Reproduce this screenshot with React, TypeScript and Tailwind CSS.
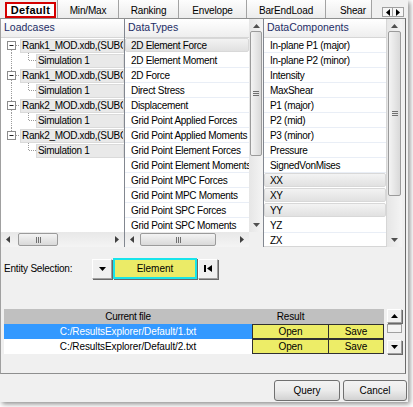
import React from 'react';

type Dir = 'up' | 'down' | 'left' | 'right';

function Tri({ dir, w = 7, h = 4, c = '#000' }: { dir: Dir; w?: number; h?: number; c?: string }) {
  const vertical = dir === 'up' || dir === 'down';
  const W = vertical ? w : h;
  const H = vertical ? h : w;
  const pts =
    dir === 'up' ? `0,${h} ${w},${h} ${w / 2},0` :
    dir === 'down' ? `0,0 ${w},0 ${w / 2},${h}` :
    dir === 'left' ? `${h},0 ${h},${w} 0,${w / 2}` :
    `0,0 0,${w} ${h},${w / 2}`;
  return (
    <svg width={W} height={H} className="block">
      <polygon points={pts} fill={c} />
    </svg>
  );
}

const tabs = [
  { label: 'Min/Max', w: 'w-[61px]' },
  { label: 'Ranking', w: 'w-[60px]' },
  { label: 'Envelope', w: 'w-[68px]' },
  { label: 'BarEndLoad', w: 'w-[79px]' },
];

const tree = [
  { t: 'Rank1_MOD.xdb,(SUBCASE 1)', root: true, first: true, last: false },
  { t: 'Simulation 1', root: false, cont: true },
  { t: 'Rank1_MOD.xdb,(SUBCASE 2)', root: true, first: false, last: false },
  { t: 'Simulation 1', root: false, cont: true },
  { t: 'Rank2_MOD.xdb,(SUBCASE 1)', root: true, first: false, last: false },
  { t: 'Simulation 1', root: false, cont: true },
  { t: 'Rank2_MOD.xdb,(SUBCASE 2)', root: true, first: false, last: true },
  { t: 'Simulation 1', root: false, cont: false },
];

const dataTypes = [
  '2D Element Force', '2D Element Moment', '2D Force', 'Direct Stress', 'Displacement',
  'Grid Point Applied Forces', 'Grid Point Applied Moments', 'Grid Point Element Forces',
  'Grid Point Element Moments', 'Grid Point MPC Forces', 'Grid Point MPC Moments',
  'Grid Point SPC Forces', 'Grid Point SPC Moments',
];

const dataComponents = [
  'In-plane P1 (major)', 'In-plane P2 (minor)', 'Intensity', 'MaxShear', 'P1 (major)', 'P2 (mid)',
  'P3 (minor)', 'Pressure', 'SignedVonMises', 'XX', 'XY', 'YY', 'YZ', 'ZX',
];
const picked = ['2D Element Force', 'XX', 'XY', 'YY'];

function Header({ children }: { children: React.ReactNode }) {
  return (
    <div className="h-[19px] shrink-0 flex items-center pl-[3px] bg-gradient-to-b from-white to-[#eeeeee] border-b border-[#d6d6d6] text-[#1d2d66] text-[10.5px] tracking-normal whitespace-nowrap">
      {children}
    </div>
  );
}

function Grip({ vertical }: { vertical?: boolean }) {
  return vertical ? (
    <div className="flex flex-col gap-[1px]">
      <div className="w-[6px] h-[1px] bg-[#707070]" />
      <div className="w-[6px] h-[1px] bg-[#707070]" />
      <div className="w-[6px] h-[1px] bg-[#707070]" />
    </div>
  ) : (
    <div className="flex gap-[1px]">
      <div className="w-[1px] h-[6px] bg-[#707070]" />
      <div className="w-[1px] h-[6px] bg-[#707070]" />
      <div className="w-[1px] h-[6px] bg-[#707070]" />
    </div>
  );
}

function ListRow({ t }: { t: string }) {
  if (picked.includes(t)) {
    return (
      <div className="h-[15px] shrink-0 pb-[1px]">
        <div className="h-[14px] flex items-center pl-[5px] bg-gradient-to-b from-[#f3f3f3] to-[#e1e1e1] border border-[#d8d8d8] rounded-[2px] whitespace-nowrap">{t}</div>
      </div>
    );
  }
  return <div className="h-[15px] shrink-0 flex items-center pl-[6px] border-b border-[#e9eef6] whitespace-nowrap">{t}</div>;
}

function TreeRow({ r }: { r: (typeof tree)[number] }) {
  const dot = { stroke: '#9c9c9c', strokeDasharray: '1 1', strokeWidth: 1 };
  return (
    <div className="h-[15px] shrink-0 flex items-center">
      {r.root ? (
        <svg width={19} height={15} className="shrink-0">
          {!r.first && <line x1={10.5} y1={0} x2={10.5} y2={3} {...dot} />}
          {!r.last && <line x1={10.5} y1={12} x2={10.5} y2={15} {...dot} />}
          <line x1={15} y1={7.5} x2={19} y2={7.5} {...dot} />
          <rect x={6.5} y={3.5} width={8} height={8} fill="#fff" stroke="#8c8c8c" />
          <line x1={8.5} y1={7.5} x2={12.5} y2={7.5} stroke="#202020" />
        </svg>
      ) : (
        <svg width={35} height={15} className="shrink-0">
          {r.cont && <line x1={10.5} y1={0} x2={10.5} y2={15} {...dot} />}
          <line x1={27.5} y1={0} x2={27.5} y2={8} {...dot} />
          <line x1={28} y1={7.5} x2={35} y2={7.5} {...dot} />
        </svg>
      )}
      <div className="h-[14px] flex-1 flex items-center pl-[1px] bg-[#e9e9e9] border border-[#dadada] whitespace-nowrap overflow-hidden">
        {r.t}
      </div>
    </div>
  );
}

function HScroll({ w, thumbL, thumbW }: { w: string; thumbL: string; thumbW: string }) {
  return (
    <div className={`${w} h-[15px] shrink-0 flex items-center bg-gradient-to-b from-[#e8e8e8] to-[#f4f4f4]`}>
      <div className="w-[14px] flex justify-center"><Tri dir="left" w={7} h={4} c="#404040" /></div>
      <div className={`${thumbL} shrink-0`} />
      <div className={`${thumbW} h-[13px] shrink-0 flex items-center justify-center rounded-[2px] border border-[#9b9b9b] bg-gradient-to-b from-[#f4f4f4] to-[#d9d9d9]`}>
        <Grip />
      </div>
      <div className="flex-1" />
      <div className="w-[14px] flex justify-center"><Tri dir="right" w={7} h={4} c="#404040" /></div>
    </div>
  );
}

function VScroll({ w, thumbH }: { w: string; thumbH: string }) {
  return (
    <div className={`${w} flex-1 flex flex-col bg-gradient-to-r from-[#e6e6e6] to-[#f4f4f4]`}>
      <div className="h-[12px] shrink-0 flex items-center justify-center pt-[1px]"><Tri dir="up" w={7} h={4} c="#505050" /></div>
      <div className={`${thumbH} shrink-0 mx-[1px] flex items-center justify-center rounded-[2px] border border-[#9b9b9b] bg-gradient-to-r from-[#f4f4f4] to-[#d9d9d9]`}>
        <Grip vertical />
      </div>
      <div className="flex-1" />
      <div className="h-[15px] shrink-0 flex items-center justify-center"><Tri dir="down" w={7} h={4} c="#505050" /></div>
    </div>
  );
}

const raised = 'bg-[#f0f0f0] border border-t-white border-l-white border-r-[#a0a0a0] border-b-[#a0a0a0] shadow-[1px_1px_0_#696969]';

export default function App() {
  return (
    <div className="w-[413px] h-[407px] bg-white overflow-hidden font-['Liberation_Sans',Arial,sans-serif] text-[10px] text-black">
      <div className="w-[408px] h-[402px] bg-[#f0f0f0] flex flex-col shadow-[2px_2px_5px_rgba(0,0,0,0.45)]">
        {/* tabs */}
        <div className="h-[18px] shrink-0 flex pl-[4px] tracking-[-0.15px]">
          <div className="w-[53px] h-[18px] pt-[2px] pl-[1px] pr-[1px]">
            <div className="h-[16px] flex items-center justify-center border-2 border-[#d40000] bg-white font-bold text-[11px] tracking-[0.3px]">Default</div>
          </div>
          {tabs.map(t => (
            <div key={t.label} className={`${t.w} h-[18px] pt-[2px] border-l border-[#a3a3a3] bg-gradient-to-b from-[#fdfdfd] to-[#ececec] flex items-center justify-center`}>
              {t.label}
            </div>
          ))}
          <div className="w-[47px] h-[18px] pt-[2px] pl-[14px] border-l border-r border-[#a3a3a3] bg-gradient-to-b from-[#fdfdfd] to-[#ececec] flex items-center overflow-hidden">Shear</div>
          <div className="flex-1 flex items-start justify-end pt-[7px] pr-[4px]">
            <div className="w-[11px] h-[10px] flex items-center justify-center border border-[#a0a0a0] bg-[#f6f6f6]"><Tri dir="left" w={7} h={4} /></div>
            <div className="w-[11px] h-[10px] flex items-center justify-center border border-l-0 border-[#a0a0a0] bg-[#f6f6f6]"><Tri dir="right" w={7} h={4} /></div>
          </div>
        </div>

        {/* main panel */}
        <div className="w-[406px] h-[356px] shrink-0 flex flex-col border border-l-[#a0a0a0] border-t-[#8e8f8f] border-b-[#8e8f8f] border-r-[#6a6a6a] tracking-[-0.3px]">
          <div className="h-[228px] shrink-0 flex w-[401px]">
            {/* Loadcases */}
            <div className="w-[123px] flex flex-col bg-white">
              <Header>Loadcases</Header>
              <div className="flex-1 flex flex-col overflow-hidden">
                {tree.map((r, i) => <TreeRow key={i} r={r} />)}
              </div>
              <HScroll w="w-[123px]" thumbL="w-[3px]" thumbW="w-[40px]" />
            </div>

            {/* DataTypes */}
            <div className="w-[139px] flex border-l border-[#828790] bg-white">
              <div className="w-[124px] flex flex-col">
                <Header>DataTypes</Header>
                <div className="flex-1 flex flex-col overflow-hidden">
                  {dataTypes.map(t => <ListRow key={t} t={t} />)}
                </div>
                <HScroll w="w-[124px]" thumbL="w-[1px]" thumbW="w-[76px]" />
              </div>
              <div className="w-[14px] flex flex-col">
                <VScroll w="w-[14px]" thumbH="h-[125px]" />
                <div className="h-[15px] shrink-0 bg-[#f0f0f0]" />
              </div>
            </div>

            {/* DataComponents */}
            <div className="w-[139px] flex border-l border-[#828790] bg-white">
              <div className="w-[123px] flex flex-col border-r border-b border-[#d6d6d6]">
                <Header>DataComponents</Header>
                <div className="flex-1 flex flex-col overflow-hidden">
                  {dataComponents.map(t => <ListRow key={t} t={t} />)}
                </div>
              </div>
              <div className="w-[15px] flex flex-col">
                <VScroll w="w-[15px]" thumbH="h-[165px]" />
              </div>
            </div>
          </div>

          {/* entity selection */}
          <div className="mt-[11px] h-[21px] shrink-0 flex items-center pl-[3px]">
            <div className="w-[88px] tracking-[-0.2px]">Entity Selection:</div>
            <div className={`w-[20px] h-[20px] flex items-center justify-center ${raised}`}><Tri dir="down" w={7} h={4} /></div>
            <div className="ml-[1px] w-[84px] h-[21px] flex items-center justify-center bg-[#ebeb67] border-2 border-[#17e4ea] shadow-[1px_1px_0_#6a6a6a] tracking-normal">Element</div>
            <div className={`ml-[1px] w-[20px] h-[20px] flex items-center justify-center gap-[1px] ${raised}`}>
              <div className="w-[2px] h-[7px] bg-black" />
              <Tri dir="left" w={7} h={5} />
            </div>
          </div>

          {/* results table */}
          <div className="mt-[30px] h-[45px] shrink-0 flex pl-[3px] tracking-[-0.1px]">
            <div className="w-[380px] flex flex-col">
              <div className="h-[15px] flex bg-[#c0c0c0]">
                <div className="w-[248px] flex items-center justify-center tracking-[-0.3px]">Current file</div>
                <div className="w-[77px] flex items-center justify-center">Result</div>
                <div className="flex-1" />
              </div>
              {['1', '2'].map(n => (
                <div key={n} className="h-[15px] flex">
                  <div className={`w-[248px] flex items-center justify-center ${n === '1' ? 'bg-[#3399ff] text-white' : 'bg-white'}`}>
                    C:/ResultsExplorer/Default/{n}.txt
                  </div>
                  <div className="w-[77px] flex items-center justify-center bg-[#eded67] border border-[#303030]">Open</div>
                  <div className="flex-1 flex items-center justify-center bg-[#eded67] border border-l-0 border-[#303030]">Save</div>
                </div>
              ))}
            </div>
            <div className="w-[3px]" />
            <div className="w-[15px] flex flex-col bg-[#f0f0f0]">
              <div className={`h-[14px] flex items-center justify-center ${raised}`}><Tri dir="up" w={7} h={4} /></div>
              <div className="mt-[1px] h-[9px] border border-[#a0a0a0] bg-[#f4f4f4]" />
              <div className="flex-1" />
              <div className={`h-[14px] flex items-center justify-center ${raised}`}><Tri dir="down" w={7} h={4} /></div>
            </div>
          </div>
        </div>

        {/* footer buttons */}
        <div className="mt-[6px] h-[21px] shrink-0 flex justify-end gap-[3px] pr-[1px]">
          <button className="w-[66px] h-[21px] rounded-[3px] border border-[#707070] bg-gradient-to-b from-[#f3f3f3] via-[#ebebeb] to-[#d2d2d2] text-[10px]">Query</button>
          <button className="w-[64px] h-[21px] rounded-[3px] border border-[#707070] bg-gradient-to-b from-[#f3f3f3] via-[#ebebeb] to-[#d2d2d2] text-[10px]">Cancel</button>
        </div>
      </div>
    </div>
  );
}
